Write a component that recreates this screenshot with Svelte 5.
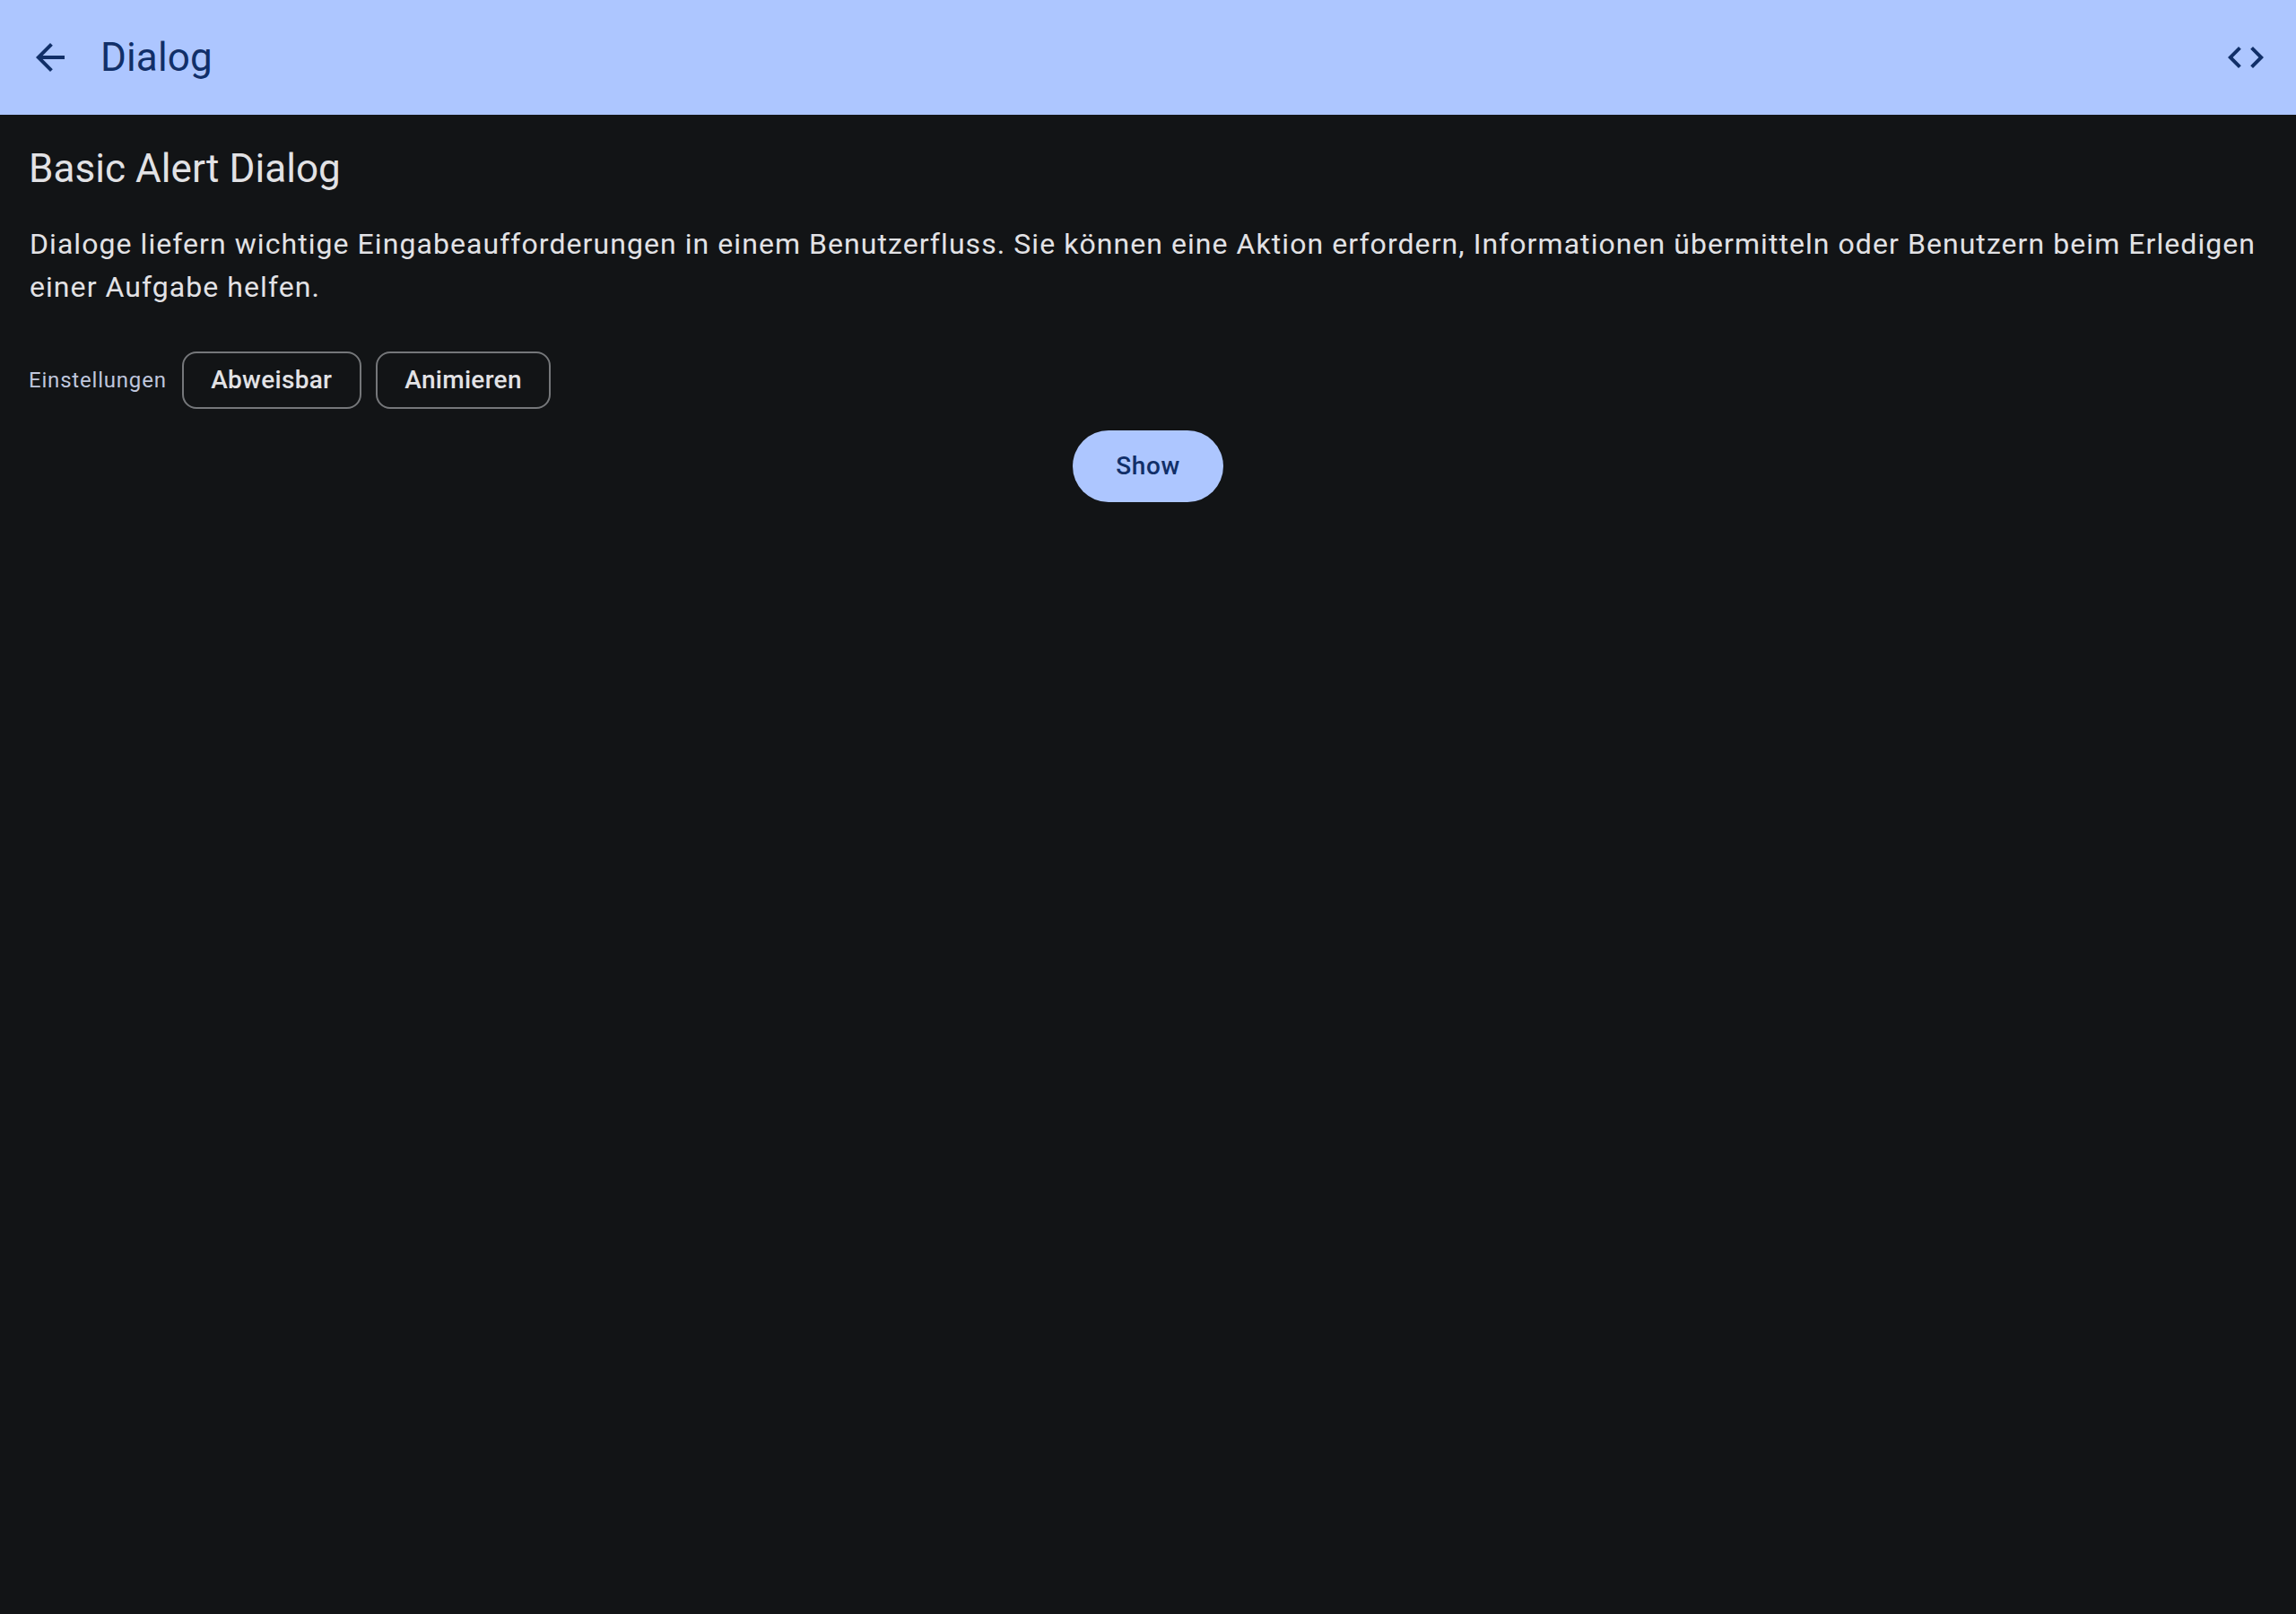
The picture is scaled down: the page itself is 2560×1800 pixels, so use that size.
<script>
  const chips = ['Abweisbar', 'Animieren'];
</script>

<div class="screen">
  <header class="bar">
    <button class="icon" aria-label="Zurück">
      <svg viewBox="0 0 24 24"><path d="M20 11H7.83l5.59-5.59L12 4l-8 8 8 8 1.41-1.41L7.83 13H20v-2z" /></svg>
    </button>
    <h1>Dialog</h1>
    <button class="icon" aria-label="Code">
      <svg viewBox="0 0 24 24"><path d="M9.4 16.6L4.8 12l4.6-4.6L8 6l-6 6 6 6 1.4-1.4zm5.2 0l4.6-4.6-4.6-4.6L16 6l6 6-6 6-1.4-1.4z" /></svg>
    </button>
  </header>
  <main>
    <h2>Basic Alert Dialog</h2>
    <p>Dialoge liefern wichtige Eingabeaufforderungen in einem Benutzerfluss. Sie können eine Aktion erfordern, Informationen übermitteln oder Benutzern beim Erledigen einer Aufgabe helfen.</p>
    <div class="settings">
      <span class="label">Einstellungen</span>
      {#each chips as chip}
        <button class="chip">{chip}</button>
      {/each}
    </div>
    <button class="show">Show</button>
  </main>
</div>

<style>
  :global(body) {
    margin: 0;
    background: #121416;
  }
  .screen {
    min-height: 1800px;
    background: #121416;
    color: #e2e2e5;
    font-family: Roboto, sans-serif;
  }
  button {
    margin: 0;
    padding: 0;
    border: 0;
    background: none;
    color: inherit;
    font: inherit;
  }
  .bar {
    display: flex;
    align-items: center;
    height: 128px;
    box-sizing: border-box;
    padding: 0 8px;
    background: #adc6ff;
    color: #112f68;
  }
  .icon {
    display: grid;
    place-items: center;
    width: 96px;
    height: 96px;
  }
  .icon svg {
    display: block;
    width: 48px;
    height: 48px;
    fill: currentColor;
  }
  h1,
  h2 {
    margin: 0;
    font-size: 44px;
    line-height: 56px;
    font-weight: 400;
    letter-spacing: 0.06px;
  }
  h1 {
    flex: 1;
    padding-left: 8px;
    letter-spacing: 0.15px;
  }
  main {
    display: flex;
    flex-direction: column;
    padding: 32px;
  }
  p {
    margin: 32px 0;
    padding-left: 1px;
    font-size: 32px;
    line-height: 48px;
    letter-spacing: 1.06px;
  }
  .settings {
    display: flex;
    align-items: center;
    gap: 16px;
    height: 96px;
  }
  .label {
    margin-right: 1px;
    color: #bfc6dc;
    font-size: 24px;
    line-height: 32px;
    letter-spacing: 0.8px;
  }
  .chip {
    height: 64px;
    box-sizing: border-box;
    padding: 0 30.5px 2px;
    border: 2px solid #75777a;
    border-radius: 16px;
    font-size: 28px;
    font-weight: 500;
    letter-spacing: 0.3px;
  }
  .show {
    align-self: center;
    height: 80px;
    margin-top: 8px;
    padding: 0 48px 2px;
    border-radius: 40px;
    background: #adc6ff;
    color: #112f68;
    font-size: 28px;
    font-weight: 500;
    letter-spacing: 0.6px;
  }
</style>
